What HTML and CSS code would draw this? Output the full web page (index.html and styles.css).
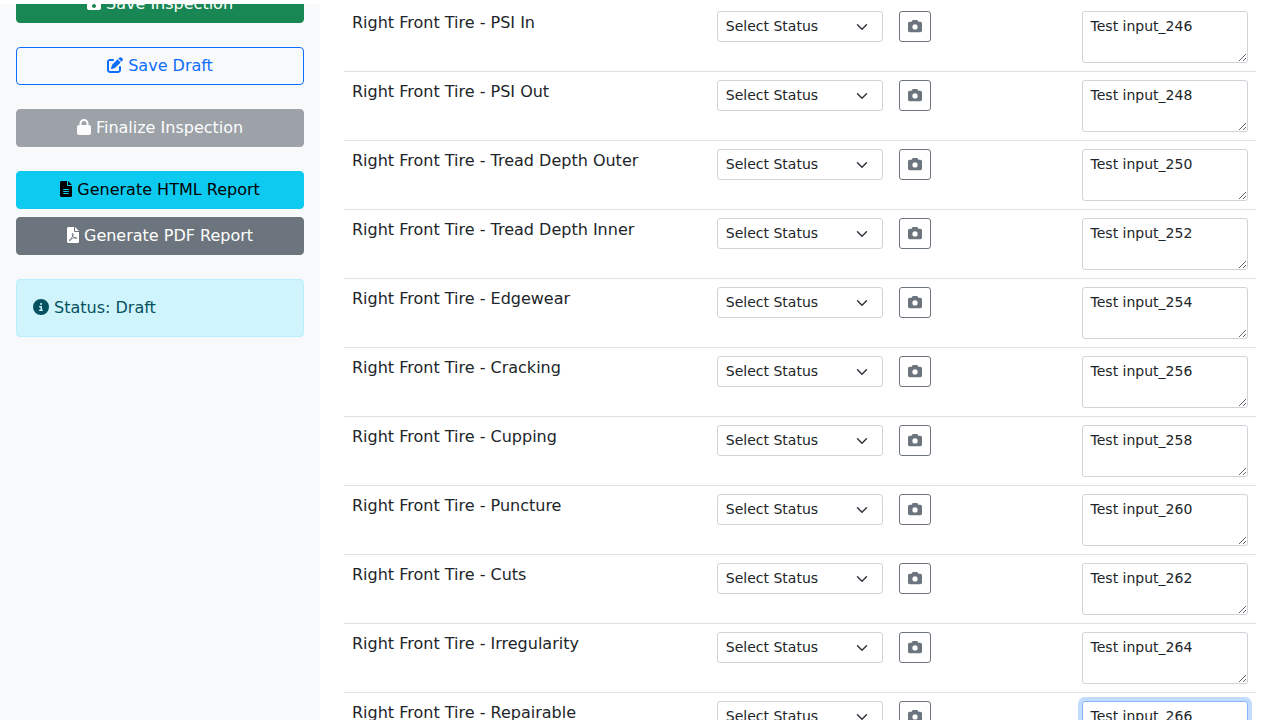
FILE: index.html
```html
<!DOCTYPE html>
<html lang="en">
<head>
<meta charset="utf-8">
<meta name="viewport" content="width=device-width, initial-scale=1">
<title>Vehicle Inspection</title>
<link rel="stylesheet" href="styles.css">
</head>
<body>
<svg class="sprite" aria-hidden="true">
  <symbol id="i-save" viewBox="0 0 448 512"><path d="M433.1 129.1l-83.9-83.9C342.3 38.3 327.1 32 316.1 32H64C28.7 32 0 60.7 0 96v320c0 35.3 28.7 64 64 64h320c35.3 0 64-28.7 64-64V163.9C448 152.9 441.7 137.7 433.1 129.1zM224 416c-35.3 0-64-28.7-64-64s28.7-64 64-64s64 28.7 64 64S259.3 416 224 416zM320 208C320 216.8 312.8 224 304 224h-224C71.2 224 64 216.8 64 208v-96C64 103.2 71.2 96 80 96h224C312.8 96 320 103.2 320 112V208z"/></symbol>
  <symbol id="i-edit" viewBox="0 0 512 512"><path d="M471.6 21.7c-21.9-21.9-57.3-21.9-79.2 0L362.3 51.7l97.9 97.9 30.1-30.1c21.9-21.9 21.9-57.3 0-79.2L471.6 21.7zm-299.2 220c-6.1 6.1-10.8 13.6-13.5 21.9l-29.6 88.8c-2.9 8.6-.6 18.1 5.8 24.6s15.9 8.7 24.6 5.8l88.8-29.6c8.2-2.7 15.7-7.4 21.9-13.5L437.7 172.3 339.7 74.3 172.4 241.7zM96 64C43 64 0 107 0 160V416c0 53 43 96 96 96H352c53 0 96-43 96-96V320c0-17.7-14.3-32-32-32s-32 14.3-32 32v96c0 17.7-14.3 32-32 32H96c-17.7 0-32-14.3-32-32V160c0-17.7 14.3-32 32-32h96c17.7 0 32-14.3 32-32s-14.3-32-32-32H96z"/></symbol>
  <symbol id="i-lock" viewBox="0 0 448 512"><path fill-rule="evenodd" d="M144 144v48H304V144c0-44.2-35.8-80-80-80s-80 35.8-80 80zM80 192V144C80 64.5 144.5 0 224 0s144 64.5 144 144v48h16c35.3 0 64 28.7 64 64V448c0 35.3-28.7 64-64 64H64c-35.3 0-64-28.7-64-64V256c0-35.3 28.7-64 64-64H80z"/></symbol>
  <symbol id="i-file" viewBox="0 0 384 512"><path d="M256 0v128h128L256 0zM224 128L224 0H48C21.5 0 0 21.5 0 48v416C0 490.5 21.5 512 48 512h288c26.5 0 48-21.5 48-48V160h-128C238.3 160 224 145.7 224 128zM272 416h-160C103.2 416 96 408.8 96 400C96 391.2 103.2 384 112 384h160c8.8 0 16 7.2 16 16C288 408.8 280.8 416 272 416zM272 352h-160C103.2 352 96 344.8 96 336C96 327.2 103.2 320 112 320h160c8.8 0 16 7.2 16 16C288 344.8 280.8 352 272 352zM288 272C288 280.8 280.8 288 272 288h-160C103.2 288 96 280.8 96 272C96 263.2 103.2 256 112 256h160C280.8 256 288 263.2 288 272z"/></symbol>
  <symbol id="i-pdf" viewBox="0 0 384 512"><path fill-rule="evenodd" d="M256 0v128h128L256 0zM224 128L224 0H48C21.5 0 0 21.5 0 48v416C0 490.5 21.5 512 48 512h288c26.5 0 48-21.5 48-48V160h-128C238.3 160 224 145.7 224 128zM181.9 256.1c-5-16-4.900-46.900-2-46.900 8.400 0 7.600 36.900 2 46.900zm-1.700 47.200c-7.700 20.200-17.300 43.300-28.400 62.700 18.300-7 39-17.200 62.900-21.900-12.700-9.600-24.900-23.400-34.500-40.800zM86.100 428.100c0 .8 13.200-5.400 34.900-40.200-6.700 6.300-29.100 24.500-34.900 40.200zM240 331.800c-20-12.200-33.300-29-42.700-53.800 4.500-18.500 11.600-46.600 6.200-64.200-4.700-29.400-42.400-26.500-47.800-6.800-5 18.300-.4 44.100 8.100 77-11.600 27.600-28.700 64.600-40.800 85.800-.1 0-.1.1-.2.1-27.100 13.900-73.600 44.500-54.500 68 5.600 6.900 16 10 21.500 10 17.900 0 35.700-18 61.100-61.800 25.800-8.500 54.100-19.100 79-23.200 21.700 11.800 47.100 19.500 64 19.500 29.200 0 31.200-32 19.700-43.400-13.900-13.600-54.300-9.700-73.600-7.200zM302.900 360.300c4.100-2.700-2.500-11.900-42.800-9 37.100 15.800 42.800 9 42.800 9z"/></symbol>
  <symbol id="i-info" viewBox="0 0 512 512"><path fill-rule="evenodd" d="M256 512A256 256 0 1 0 256 0a256 256 0 1 0 0 512zM216 336h24V272H216c-13.300 0-24-10.700-24-24s10.700-24 24-24h48c13.300 0 24 10.700 24 24v88h8c13.300 0 24 10.700 24 24s-10.700 24-24 24H216c-13.300 0-24-10.700-24-24s10.700-24 24-24zm40-208a32 32 0 1 1 0 64 32 32 0 1 1 0-64z"/></symbol>
  <symbol id="i-camera" viewBox="0 0 512 512"><path fill-rule="evenodd" d="M149.100 64.800L138.700 96H64C28.700 96 0 124.700 0 160V416c0 35.300 28.700 64 64 64H448c35.300 0 64-28.700 64-64V160c0-35.300-28.700-64-64-64H373.300L362.900 64.800C356.400 45.200 338.100 32 317.400 32H194.600c-20.700 0-39 13.200-45.500 32.800zM256 192a96 96 0 1 1 0 192 96 96 0 1 1 0-192z"/></symbol>
</svg>

<div class="topbar"></div>
<div class="layout">
  <aside class="sidebar">
    <button type="button" class="btn btn-success"><svg class="icon icon-14"><use href="#i-save"/></svg> Save Inspection</button>
    <button type="button" class="btn btn-outline"><svg class="icon"><use href="#i-edit"/></svg> Save Draft</button>
    <button type="button" class="btn btn-secondary" disabled><svg class="icon icon-14"><use href="#i-lock"/></svg> Finalize Inspection</button>
    <div class="btn-group">
      <button type="button" class="btn btn-info"><svg class="icon icon-12"><use href="#i-file"/></svg> Generate HTML Report</button>
      <button type="button" class="btn btn-secondary"><svg class="icon icon-12"><use href="#i-pdf"/></svg> Generate PDF Report</button>
    </div>
    <div class="alert" role="status"><svg class="icon"><use href="#i-info"/></svg> Status: Draft</div>
  </aside>

  <main class="content">
    <table class="items">
      <colgroup><col class="col-name"><col class="col-part"><col class="col-part"><col class="col-part"></colgroup>
      <tbody>
        <tr><td><label for="n246">Right Front Tire - PSI In</label></td><td><select class="select" aria-label="PSI In status"><option>Select Status</option></select></td><td><button type="button" class="photo" aria-label="Add photo"><svg class="icon"><use href="#i-camera"/></svg></button></td><td><textarea class="notes" id="n246" rows="2">Test input_246</textarea></td></tr>
        <tr><td><label for="n248">Right Front Tire - PSI Out</label></td><td><select class="select" aria-label="PSI Out status"><option>Select Status</option></select></td><td><button type="button" class="photo" aria-label="Add photo"><svg class="icon"><use href="#i-camera"/></svg></button></td><td><textarea class="notes" id="n248" rows="2">Test input_248</textarea></td></tr>
        <tr><td><label for="n250">Right Front Tire - Tread Depth Outer</label></td><td><select class="select" aria-label="Tread Depth Outer status"><option>Select Status</option></select></td><td><button type="button" class="photo" aria-label="Add photo"><svg class="icon"><use href="#i-camera"/></svg></button></td><td><textarea class="notes" id="n250" rows="2">Test input_250</textarea></td></tr>
        <tr><td><label for="n252">Right Front Tire - Tread Depth Inner</label></td><td><select class="select" aria-label="Tread Depth Inner status"><option>Select Status</option></select></td><td><button type="button" class="photo" aria-label="Add photo"><svg class="icon"><use href="#i-camera"/></svg></button></td><td><textarea class="notes" id="n252" rows="2">Test input_252</textarea></td></tr>
        <tr><td><label for="n254">Right Front Tire - Edgewear</label></td><td><select class="select" aria-label="Edgewear status"><option>Select Status</option></select></td><td><button type="button" class="photo" aria-label="Add photo"><svg class="icon"><use href="#i-camera"/></svg></button></td><td><textarea class="notes" id="n254" rows="2">Test input_254</textarea></td></tr>
        <tr><td><label for="n256">Right Front Tire - Cracking</label></td><td><select class="select" aria-label="Cracking status"><option>Select Status</option></select></td><td><button type="button" class="photo" aria-label="Add photo"><svg class="icon"><use href="#i-camera"/></svg></button></td><td><textarea class="notes" id="n256" rows="2">Test input_256</textarea></td></tr>
        <tr><td><label for="n258">Right Front Tire - Cupping</label></td><td><select class="select" aria-label="Cupping status"><option>Select Status</option></select></td><td><button type="button" class="photo" aria-label="Add photo"><svg class="icon"><use href="#i-camera"/></svg></button></td><td><textarea class="notes" id="n258" rows="2">Test input_258</textarea></td></tr>
        <tr><td><label for="n260">Right Front Tire - Puncture</label></td><td><select class="select" aria-label="Puncture status"><option>Select Status</option></select></td><td><button type="button" class="photo" aria-label="Add photo"><svg class="icon"><use href="#i-camera"/></svg></button></td><td><textarea class="notes" id="n260" rows="2">Test input_260</textarea></td></tr>
        <tr><td><label for="n262">Right Front Tire - Cuts</label></td><td><select class="select" aria-label="Cuts status"><option>Select Status</option></select></td><td><button type="button" class="photo" aria-label="Add photo"><svg class="icon"><use href="#i-camera"/></svg></button></td><td><textarea class="notes" id="n262" rows="2">Test input_262</textarea></td></tr>
        <tr><td><label for="n264">Right Front Tire - Irregularity</label></td><td><select class="select" aria-label="Irregularity status"><option>Select Status</option></select></td><td><button type="button" class="photo" aria-label="Add photo"><svg class="icon"><use href="#i-camera"/></svg></button></td><td><textarea class="notes" id="n264" rows="2">Test input_264</textarea></td></tr>
        <tr><td><label for="n266">Right Front Tire - Repairable</label></td><td><select class="select" aria-label="Repairable status"><option>Select Status</option></select></td><td><button type="button" class="photo" aria-label="Add photo"><svg class="icon"><use href="#i-camera"/></svg></button></td><td><textarea class="notes is-active" id="n266" rows="2">Test input_266</textarea></td></tr>
      </tbody>
    </table>
  </main>
</div>
</body>
</html>
```

FILE: styles.css
```css
*,
*::before,
*::after {
  box-sizing: border-box;
}

body {
  margin: 0;
  font-family: "DejaVu Sans", sans-serif;
  font-size: 16px;
  line-height: 24px;
  color: #212529;
  background: #fff;
}

button,
select,
textarea {
  margin: 0;
  font-family: inherit;
}

.sprite {
  display: none;
}

.topbar {
  position: fixed;
  inset: 0 0 auto 0;
  height: 4px;
  background: #fff;
  z-index: 10;
}

.layout {
  display: flex;
  height: 100vh;
  overflow: hidden;
}

.sidebar {
  flex: 0 0 25%;
  display: flex;
  flex-direction: column;
  gap: 24px;
  margin-top: -31px;
  padding: 16px;
  background: #f8f9fa;
}

.content {
  flex: 1;
  min-width: 0;
  padding: 3px 24px 24px;
}

.icon {
  width: 16px;
  height: 16px;
  fill: currentColor;
  vertical-align: -2px;
}

.icon-14 {
  width: 14px;
}

.icon-12 {
  width: 12px;
}

.btn {
  display: block;
  width: 100%;
  padding: 6px 12px;
  border: 1px solid transparent;
  border-radius: 4px;
  font-size: 16px;
  line-height: 24px;
  text-align: center;
  cursor: pointer;
}

.btn:disabled {
  opacity: 0.65;
  cursor: default;
}

.btn-group {
  display: flex;
  flex-direction: column;
  gap: 8px;
}

.btn-success {
  color: #fff;
  background: #198754;
  border-color: #198754;
}

.btn-outline {
  color: #0d6efd;
  background: transparent;
  border-color: #0d6efd;
}

.btn-secondary {
  color: #fff;
  background: #6c757d;
  border-color: #6c757d;
}

.btn-info {
  color: #000;
  background: #0dcaf0;
  border-color: #0dcaf0;
}

.alert {
  padding: 16px;
  border: 1px solid #b6effb;
  border-radius: 4px;
  color: #055160;
  background: #cff4fc;
}

.items {
  width: 100%;
  table-layout: fixed;
  border-collapse: collapse;
}

.col-name {
  width: 40%;
}

.col-part {
  width: 20%;
}

.items td {
  padding: 8px;
  border-bottom: 1px solid #dee2e6;
  vertical-align: top;
}

.select,
.notes {
  display: block;
  width: 100%;
  border: 1px solid #ced4da;
  border-radius: 3px;
  font-size: 14px;
  line-height: 21px;
  color: #212529;
  background-color: #fff;
}

.select {
  height: 31px;
  padding: 4px 36px 4px 8px;
  appearance: none;
  background-image: url("data:image/svg+xml,%3csvg xmlns='http://www.w3.org/2000/svg' viewBox='0 0 16 16'%3e%3cpath fill='none' stroke='%23343a40' stroke-linecap='round' stroke-linejoin='round' stroke-width='2' d='M2 5l6 6 6-6'/%3e%3c/svg%3e");
  background-repeat: no-repeat;
  background-position: right 12px center;
  background-size: 16px 12px;
}

.notes {
  padding: 4px 8px;
  resize: vertical;
}

.notes:focus,
.notes.is-active {
  border-color: #86b7fe;
  outline: 0;
  box-shadow: 0 0 0 4px rgba(13, 110, 253, 0.25);
}

.photo {
  display: block;
  padding: 4px 8px;
  border: 1px solid #6c757d;
  border-radius: 3px;
  font-size: 14px;
  line-height: 21px;
  color: #6c757d;
  background: transparent;
  cursor: pointer;
}

.photo .icon {
  width: 14px;
  height: 14px;
}
```
